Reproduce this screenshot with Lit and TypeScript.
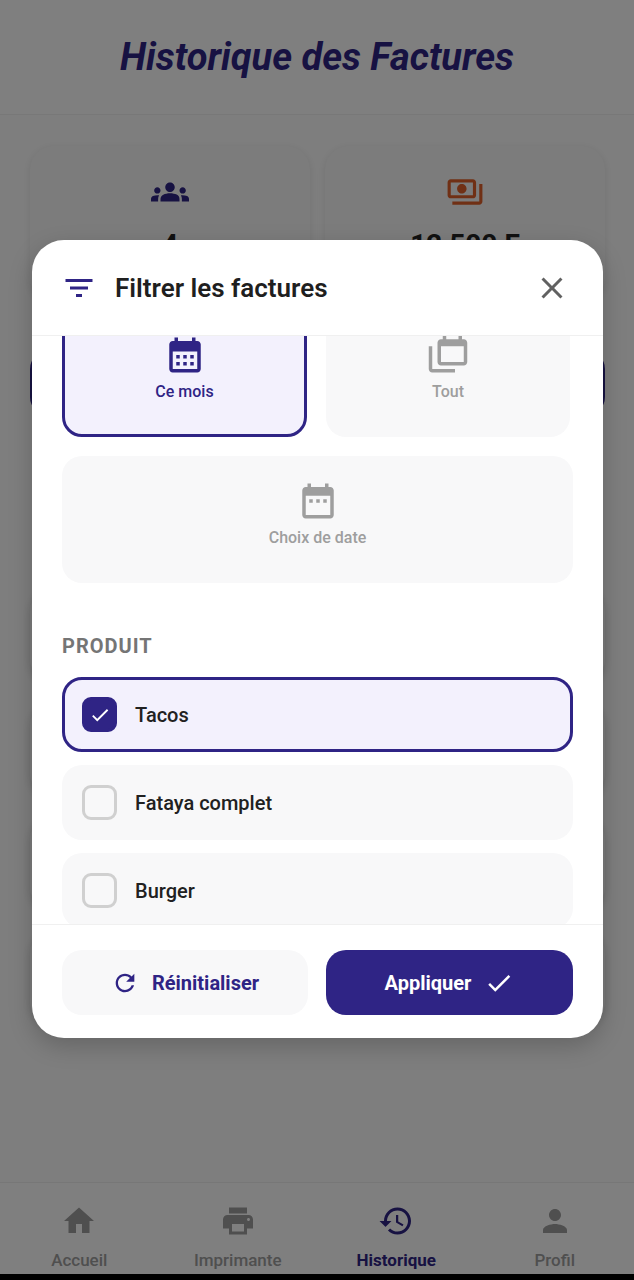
import { LitElement, html, css, svg } from 'lit';
import { customElement } from 'lit/decorators.js';

const ICONS: Record<string, string> = {
  groups: 'M12 12.75c1.63 0 3.07.39 4.24.9 1.08.48 1.76 1.56 1.76 2.73V18H6v-1.61c0-1.18.68-2.26 1.76-2.73 1.17-.52 2.61-.91 4.24-.91zM4 13c1.1 0 2-.9 2-2s-.9-2-2-2-2 .9-2 2 .9 2 2 2zm1.13 1.1c-.37-.06-.74-.1-1.13-.1-.99 0-1.93.21-2.78.58C.48 14.9 0 15.62 0 16.43V18h4.5v-1.61c0-.83.23-1.61.63-2.29zM20 13c1.1 0 2-.9 2-2s-.9-2-2-2-2 .9-2 2 .9 2 2 2zm4 3.43c0-.81-.48-1.53-1.22-1.85-.85-.37-1.79-.58-2.78-.58-.39 0-.76.04-1.13.1.4.68.63 1.46.63 2.29V18H24v-1.57zM12 6c1.66 0 3 1.34 3 3s-1.34 3-3 3-3-1.34-3-3 1.34-3 3-3z',
  payments: 'M19 14V6c0-1.1-.9-2-2-2H3c-1.1 0-2 .9-2 2v8c0 1.1.9 2 2 2h14c1.1 0 2-.9 2-2zm-2 0H3V6h14v8zm-7-7c-1.66 0-3 1.34-3 3s1.34 3 3 3 3-1.34 3-3-1.34-3-3-3zm13 0v11c0 1.1-.9 2-2 2H4v-2h17V7h2z',
  filter: 'M10 18h4v-2h-4v2zM3 6v2h18V6H3zm3 7h12v-2H6v2z',
  close: 'M19 6.41 17.59 5 12 10.59 6.41 5 5 6.41 10.59 12 5 17.59 6.41 19 12 13.41 17.59 19 19 17.59 13.41 12z',
  month: 'M19 4h-1V2h-2v2H8V2H6v2H5c-1.11 0-1.99.9-1.99 2L3 20c0 1.1.89 2 2 2h14c1.1 0 2-.9 2-2V6c0-1.1-.9-2-2-2zm0 16H5V10h14v10zM9 14H7v-2h2v2zm4 0h-2v-2h2v2zm4 0h-2v-2h2v2zm-8 4H7v-2h2v2zm4 0h-2v-2h2v2zm4 0h-2v-2h2v2z',
  all: 'M21 3h-1V1h-2v2h-7V1H9v2H8c-1.1 0-2 .9-2 2v11c0 1.1.9 2 2 2h13c1.1 0 2-.9 2-2V5c0-1.1-.9-2-2-2zm0 13H8V7h13v9zM3 7H1v13c0 1.1.9 2 2 2h13v-2H3V7z',
  date: 'M19 4h-1V2h-2v2H8V2H6v2H5c-1.11 0-1.99.9-1.99 2L3 20c0 1.1.89 2 2 2h14c1.1 0 2-.9 2-2V6c0-1.1-.9-2-2-2zm0 16H5V9h14v11zM9 13H7v-2h2v2zm4 0h-2v-2h2v2zm4 0h-2v-2h2v2z',
  check: 'M9 16.17 4.83 12l-1.42 1.41L9 19 21 7l-1.41-1.41z',
  refresh: 'M17.65 6.35C16.2 4.9 14.21 4 12 4c-4.42 0-7.99 3.58-7.99 8s3.57 8 7.99 8c3.73 0 6.84-2.55 7.73-6h-2.08c-.82 2.33-3.04 4-5.65 4-3.31 0-6-2.69-6-6s2.69-6 6-6c1.66 0 3.14.69 4.22 1.78L13 11h7V4l-2.35 2.35z',
  eye: 'M12 6c3.79 0 7.17 2.13 8.82 5.5C19.17 14.87 15.79 17 12 17s-7.17-2.13-8.82-5.5C4.83 8.13 8.21 6 12 6m0-2C7 4 2.73 7.11 1 11.5 2.73 15.89 7 19 12 19s9.27-3.11 11-7.5C21.27 7.11 17 4 12 4zm0 5c1.38 0 2.5 1.12 2.5 2.5S13.38 14 12 14s-2.5-1.12-2.5-2.5S10.62 9 12 9m0-2c-2.48 0-4.5 2.02-4.5 4.5S9.52 16 12 16s4.5-2.02 4.5-4.5S14.48 7 12 7z',
  home: 'M10 20v-6h4v6h5v-8h3L12 3 2 12h3v8z',
  print: 'M19 8H5c-1.66 0-3 1.34-3 3v6h4v4h12v-4h4v-6c0-1.66-1.34-3-3-3zm-3 11H8v-5h8v5zm3-7c-.55 0-1-.45-1-1s.45-1 1-1 1 .45 1 1-.45 1-1 1zm-1-9H6v4h12V3z',
  history: 'M13 3c-4.97 0-9 4.03-9 9H1l3.89 3.89.07.14L9 12H6c0-3.87 3.13-7 7-7s7 3.13 7 7-3.13 7-7 7c-1.93 0-3.68-.79-4.94-2.06l-1.42 1.42C8.27 19.99 10.51 21 13 21c4.97 0 9-4.03 9-9s-4.03-9-9-9zm-1 5v5l4.28 2.54.72-1.21-3.5-2.08V8H12z',
  person: 'M12 12c2.21 0 4-1.79 4-4s-1.79-4-4-4-4 1.79-4 4 1.79 4 4 4zm0 2c-2.67 0-8 1.34-8 4v2h16v-2c0-2.66-5.33-4-8-4z',
};

const icon = (name: string, size: number) => html`<svg class="ico" width=${size} height=${size} viewBox="0 0 24 24" fill="currentColor">${svg`<path d=${ICONS[name]}></path>`}</svg>`;

const NAV = [
  { label: 'Accueil', icon: 'home' },
  { label: 'Imprimante', icon: 'print' },
  { label: 'Historique', icon: 'history', active: true },
  { label: 'Profil', icon: 'person' },
];

@customElement('app-root')
export class AppRoot extends LitElement {
  static styles = css`
    :host {
      display: block;
      position: relative;
      width: 634px;
      height: 1280px;
      overflow: hidden;
      background: #000;
      font-family: Roboto, "Noto Sans", sans-serif;
    }
    .ico { display: block; flex: none; }

    /* page behind the dialog */
    .page {
      height: 1274px;
      display: flex;
      flex-direction: column;
      background: #fdfdfd;
    }
    .top {
      height: 115px;
      flex: none;
      display: flex;
      align-items: center;
      justify-content: center;
      background: #fff;
      border-bottom: 1px solid #f0f0f0;
      box-sizing: border-box;
    }
    .top h1 {
      margin: 0;
      font-size: 38px;
      font-weight: 700;
      font-style: italic;
      color: #2f2485;
    }
    .content {
      flex: 1;
      min-height: 0;
      padding: 31px 29px 0 30px;
      overflow: hidden;
      display: flex;
      flex-direction: column;
    }
    .stats { display: grid; grid-template-columns: 280px 280px; gap: 15px; }
    .stat {
      height: 156px;
      padding-top: 27px;
      box-sizing: border-box;
      border-radius: 24px;
      background: #f8f8f8;
      box-shadow: 0 2px 8px rgba(0, 0, 0, .1);
      display: flex;
      flex-direction: column;
      align-items: center;
      font-size: 28px;
      font-weight: 700;
      color: #222;
      gap: 17px;
    }
    .stat .people { color: #2f2485; }
    .stat .money { color: #e0612a; }
    .search {
      height: 64px;
      margin-top: 49px;
      border-radius: 18px;
      background: #2f2485;
      flex: none;
    }
    .rows { margin-top: 172px; display: flex; flex-direction: column; gap: 18px; }
    .row {
      height: 96px;
      box-sizing: border-box;
      border-radius: 24px;
      background: #f8f8f8;
      box-shadow: 0 3px 8px rgba(0, 0, 0, .16);
      padding: 0 50px 0 23px;
      display: flex;
      align-items: center;
      flex: none;
    }
    .inv { width: 185px; font-size: 20px; font-weight: 700; color: #2f2485; white-space: nowrap; overflow: hidden; text-overflow: ellipsis; }
    .day { width: 132px; font-size: 20px; color: #333; }
    .sum { flex: 1; font-size: 20px; font-weight: 700; color: #2f2485; }
    .see {
      width: 52px;
      height: 52px;
      border-radius: 12px;
      background: #ece9f8;
      color: #2f2485;
      display: flex;
      align-items: center;
      justify-content: center;
    }
    .nav {
      height: 92px;
      flex: none;
      box-sizing: border-box;
      background: #fff;
      border-top: 1px solid #eee;
      display: grid;
      grid-template-columns: repeat(4, 1fr);
    }
    .tab {
      display: flex;
      flex-direction: column;
      align-items: center;
      padding-top: 20px;
      font-size: 17px;
      line-height: 20px;
      font-weight: 500;
      color: #9e9e9e;
      gap: 11px;
    }
    .tab.on { color: #2f2485; font-weight: 700; }

    /* dialog */
    .veil {
      position: absolute;
      inset: 0;
      background: rgba(0, 0, 0, .5);
      padding: 240px 31px 0 32px;
      box-sizing: border-box;
    }
    .sheet {
      height: 798px;
      border-radius: 32px;
      background: #fff;
      display: flex;
      flex-direction: column;
      overflow: hidden;
      box-shadow: 0 8px 24px rgba(0, 0, 0, .2);
    }
    .head {
      height: 96px;
      flex: none;
      box-sizing: border-box;
      border-bottom: 1px solid #f0f0f0;
      display: flex;
      align-items: center;
      padding: 0 33px 0 29px;
      color: #1f1f1f;
    }
    .head .filter { color: #2f2485; }
    .head h2 { margin: 0 0 0 18px; flex: 1; font-size: 26px; font-weight: 600; }
    .head .close { color: #616161; }
    .body { flex: 1; min-height: 0; overflow: hidden; padding: 0 30px; }
    .periods { margin-top: -26px; display: grid; grid-template-columns: 245px 244px; gap: 19px 19px; }
    .period {
      height: 127px;
      box-sizing: border-box;
      border-radius: 20px;
      background: #f8f8f9;
      color: #9e9e9e;
      display: flex;
      flex-direction: column;
      align-items: center;
      padding-top: 24px;
      font-size: 16px;
      font-weight: 500;
      gap: 6px;
    }
    .period.wide { grid-column: 1 / -1; width: 511px; }
    .period.on { background: #f3f1fd; border: 3px solid #2f2485; padding-top: 21px; color: #2f2485; }
    .section {
      margin: 51px 0 19px;
      font-size: 20px;
      line-height: 24px;
      font-weight: 700;
      letter-spacing: 1px;
      color: #757575;
    }
    .options { display: flex; flex-direction: column; gap: 13px; }
    .option {
      height: 75px;
      box-sizing: border-box;
      border-radius: 20px;
      background: #f8f8f9;
      display: flex;
      align-items: center;
      padding-left: 20px;
      gap: 18px;
      font-size: 20px;
      font-weight: 500;
      color: #212121;
    }
    .option.on { background: #f3f1fd; border: 3px solid #2f2485; padding-left: 17px; }
    .box {
      width: 35px;
      height: 35px;
      box-sizing: border-box;
      border-radius: 9px;
      border: 3px solid #d0d0d0;
      display: flex;
      align-items: center;
      justify-content: center;
      color: #fff;
    }
    .on .box { background: #2f2485; border-color: #2f2485; }
    .foot {
      height: 114px;
      flex: none;
      box-sizing: border-box;
      border-top: 1px solid #f0f0f0;
      padding: 25px 30px 0;
      display: grid;
      grid-template-columns: 246px 247px;
      gap: 18px;
    }
    .btn {
      height: 65px;
      border: 0;
      border-radius: 20px;
      display: flex;
      align-items: center;
      justify-content: center;
      font: 700 20px Roboto, sans-serif;
    }
    .btn.reset { background: #f8f8f9; color: #2f2485; gap: 13px; }
    .btn.apply { background: #2f2485; color: #fff; gap: 13px; }
  `;

  render() {
    return html`
      <div class="page">
        <header class="top"><h1>Historique des Factures</h1></header>
        <div class="content">
          <div class="stats">
            <div class="stat"><span class="people">${icon('groups', 38)}</span>4</div>
            <div class="stat"><span class="money">${icon('payments', 38)}</span>12,500 F</div>
          </div>
          <div class="search"></div>
          <div class="rows">
            <div class="row"></div>
            <div class="row"></div>
            <div class="row"></div>
            <div class="row">
              <span class="inv">INV-20260403-0001</span>
              <span class="day">03/04/2026</span>
              <span class="sum">2,500 F</span>
              <span class="see">${icon('eye', 30)}</span>
            </div>
          </div>
        </div>
        <nav class="nav">
          ${NAV.map(n => html`<div class="tab ${n.active ? 'on' : ''}">${icon(n.icon, 36)}${n.label}</div>`)}
        </nav>
      </div>

      <div class="veil">
        <section class="sheet">
          <div class="head">
            <span class="filter">${icon('filter', 36)}</span>
            <h2>Filtrer les factures</h2>
            <span class="close">${icon('close', 36)}</span>
          </div>
          <div class="body">
            <div class="periods">
              <div class="period on">${icon('month', 42)}Ce mois</div>
              <div class="period">${icon('all', 42)}Tout</div>
              <div class="period wide">${icon('date', 42)}Choix de date</div>
            </div>
            <div class="section">PRODUIT</div>
            <div class="options">
              <div class="option on"><span class="box">${icon('check', 22)}</span>Tacos</div>
              <div class="option"><span class="box"></span>Fataya complet</div>
              <div class="option"><span class="box"></span>Burger</div>
            </div>
          </div>
          <div class="foot">
            <button class="btn reset">${icon('refresh', 28)}Réinitialiser</button>
            <button class="btn apply">Appliquer ${icon('check', 30)}</button>
          </div>
        </section>
      </div>
    `;
  }
}
